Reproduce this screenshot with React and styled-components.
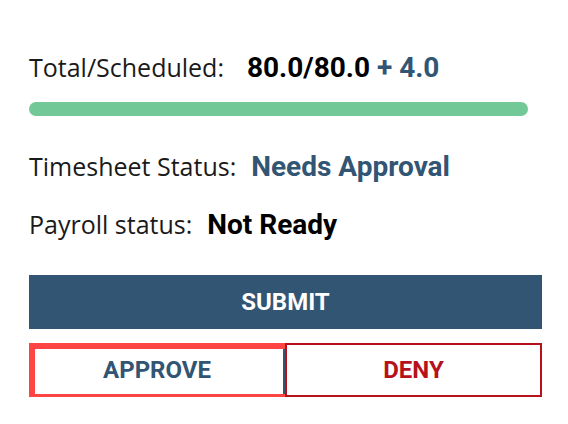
import React from "react";
import styled, { createGlobalStyle } from "styled-components";

const Global = createGlobalStyle`
  html, body { margin: 0; padding: 0; background: #ffffff; }
  body { font-family: "Open Sans", "Liberation Sans", sans-serif; }
  * { box-sizing: border-box; }
`;

const Panel = styled.div`
  width: 568px;
  padding: 50px 26px 0 29px;
  display: flex;
  flex-direction: column;
`;

const Row = styled.div`
  display: flex;
  align-items: baseline;
  gap: ${(p) => p.$gap || 12}px;
  height: ${(p) => p.$h}px;
`;

const Label = styled.span`
  font-family: "Open Sans", sans-serif;
  font-size: 25px;
  color: #1a1a1a;
`;

const Value = styled.span`
  font-family: Roboto, sans-serif;
  font-weight: 700;
  font-size: 28px;
  color: ${(p) => p.$color || "#000"};
`;

const Track = styled.div`
  width: 499px;
  height: 14px;
  border-radius: 7px;
  background: #72c896;
  margin: 12px 0 33px;
`;

const Actions = styled.div`
  display: flex;
  flex-direction: column;
  gap: 14px;
  margin-top: 10px;
`;

const Primary = styled.button`
  height: 54px;
  border: none;
  background: #325573;
  color: #fff;
  font-family: Roboto, sans-serif;
  font-weight: 700;
  font-size: 24px;
  width: 513px;
`;

const Pair = styled.div`
  display: grid;
  grid-template-columns: 256px 257px;
`;

const Outline = styled.button`
  position: relative;
  height: 54px;
  background: #fff;
  border: 2px solid ${(p) => p.$color};
  color: ${(p) => p.$color};
  font-family: Roboto, sans-serif;
  font-weight: 700;
  font-size: 24px;
  ${(p) =>
    p.$focused &&
    `
    &::after {
      content: "";
      position: absolute;
      left: -2px;
      top: -2px;
      right: -8px;
      bottom: -5px;
      border: 6px solid #ff4444;
      pointer-events: none;
    }
  `}
`;

export default function App() {
  return (
    <>
      <Global />
      <Panel>
        <Row $h={40} $gap={23}>
          <Label>Total/Scheduled:</Label>
          <Value>
            80.0/80.0 <Value $color="#325573">+ 4.0</Value>
          </Value>
        </Row>
        <Track />
        <Row $h={58} $gap={15}>
          <Label>Timesheet Status:</Label>
          <Value $color="#325573">Needs Approval</Value>
        </Row>
        <Row $h={58} $gap={15}>
          <Label>Payroll status:</Label>
          <Value>Not Ready</Value>
        </Row>
        <Actions>
          <Primary>SUBMIT</Primary>
          <Pair>
            <Outline $color="#325573" $focused>APPROVE</Outline>
            <Outline $color="#b5121b">DENY</Outline>
          </Pair>
        </Actions>
      </Panel>
    </>
  );
}
